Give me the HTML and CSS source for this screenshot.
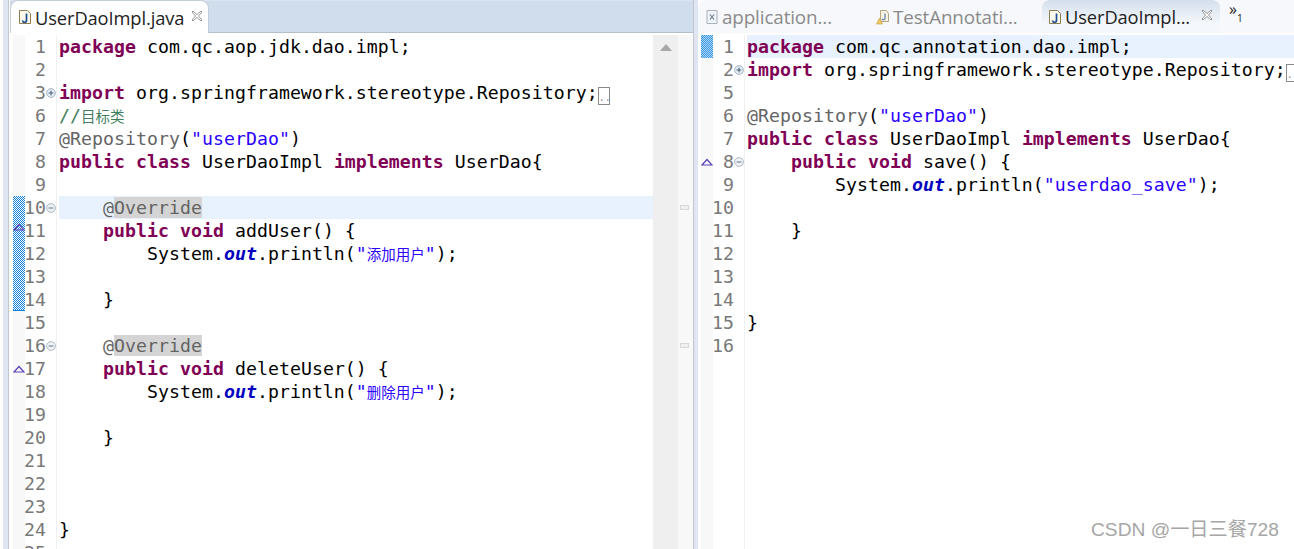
FILE: index.html
```html
<!DOCTYPE html>
<html lang="zh">
<head>
<meta charset="UTF-8">
<title>UserDaoImpl.java</title>
<link rel="stylesheet" href="styles.css">
</head>
<body>
<svg class="defs" width="0" height="0">
<symbol id="jfile" viewBox="0 0 14 16"><path d="M1.5 1.5h8l3 3v10h-11z" fill="#fbf8ee" stroke="#8f7f50"/><path d="M8.5 4.5v6.5a2 2 0 0 1-4 .5" fill="none" stroke="#1f4f8f" stroke-width="1.7"/></symbol>
<symbol id="close" viewBox="0 0 12 12"><path d="M2 1l4 3.5L10 1l1 1-3.5 4L11 10l-1 1-4-3.5L2 11l-1-1 3.5-4L1 2z" fill="#fff" stroke="#8a8a8a" stroke-width=".9"/></symbol>
<symbol id="rev" viewBox="0 0 12 8"><path d="M1 7L6 1.5 11 7z" fill="none" stroke="#5a3fb5" stroke-width="1.2"/></symbol>
<symbol id="plus" viewBox="0 0 10 10"><circle cx="5" cy="5" r="4.4" fill="#e4ebf2" stroke="#9fb0c0" stroke-width=".9"/><path d="M2.6 5h4.8M5 2.6v4.8" stroke="#33506e" stroke-width=".9"/></symbol>
<symbol id="minus" viewBox="0 0 10 10"><circle cx="5" cy="5" r="4.4" fill="#eef1f4" stroke="#a8b4c0" stroke-width=".9"/><path d="M2.6 5h4.8" stroke="#5a6a7a" stroke-width=".9"/></symbol>
</svg>

<div class="strip"></div>

<div class="pane pane-left">
  <div class="tabbar tabbar-left">
    <div class="tab tab-open">
      <svg class="ficon"><use href="#jfile"/></svg>
      <span class="tab-name">UserDaoImpl.java</span>
      <svg class="xicon"><use href="#close"/></svg>
    </div>
  </div>
  <div class="editor">
    <div class="ruler">
      <div class="mark-row"></div><div class="mark-row"></div><div class="mark-row"></div><div class="mark-row"></div><div class="mark-row"></div><div class="mark-row"></div><div class="mark-row"></div>
      <div class="diff diff-5"><svg class="rev rev-in"><use href="#rev"/></svg></div>
      <div class="mark-row"></div><div class="mark-row"></div>
      <div class="mark-row"><svg class="rev"><use href="#rev"/></svg></div>
    </div>
    <div class="nums">
      <div>1</div><div>2</div><div>3</div><div>6</div><div>7</div><div>8</div><div>9</div><div>10</div><div>11</div><div>12</div><div>13</div><div>14</div><div>15</div><div>16</div><div>17</div><div>18</div><div>19</div><div>20</div><div>21</div><div>22</div><div>23</div><div>24</div><div>25</div>
    </div>
    <div class="folds">
      <div></div><div></div><div><svg class="fold"><use href="#plus"/></svg></div><div></div><div></div><div></div><div></div><div><svg class="fold"><use href="#minus"/></svg></div><div></div><div></div><div></div><div></div><div></div><div><svg class="fold"><use href="#minus"/></svg></div>
    </div>
    <div class="code">
      <div><b>package</b> com.qc.aop.jdk.dao.impl;</div>
      <div></div>
      <div><b>import</b> org.springframework.stereotype.Repository;<span class="collapsed">..</span></div>
      <div><span class="cm">//<span class="cjk">目标类</span></span></div>
      <div><span class="an">@Repository</span>(<span class="st">"userDao"</span>)</div>
      <div><b>public</b> <b>class</b> UserDaoImpl <b>implements</b> UserDao{</div>
      <div></div>
      <div class="cur">    <span class="an">@<span class="occ">Override</span></span></div>
      <div>    <b>public</b> <b>void</b> addUser() {</div>
      <div>        System.<i>out</i>.println(<span class="st">"<span class="cjk">添加用户</span>"</span>);</div>
      <div></div>
      <div>    }</div>
      <div></div>
      <div>    <span class="an">@<span class="occ">Override</span></span></div>
      <div>    <b>public</b> <b>void</b> deleteUser() {</div>
      <div>        System.<i>out</i>.println(<span class="st">"<span class="cjk">删除用户</span>"</span>);</div>
      <div></div>
      <div>    }</div>
      <div></div>
      <div></div>
      <div></div>
      <div>}</div>
    </div>
    <div class="scrollbar"><div class="arrow-up"></div></div>
    <div class="overview">
      <div class="occ-mark occ-first"></div>
      <div class="occ-mark occ-second"></div>
    </div>
  </div>
</div>

<div class="sash"></div>

<div class="pane pane-right">
  <div class="tabbar tabbar-right">
    <div class="tab tab-app">
      <svg class="ficon" viewBox="0 0 14 16"><path d="M2 1.5h10v13H2z" fill="#f0f3f7" stroke="#a8b2be"/><path d="M5 5.5l4 5M9 5.5l-4 5" stroke="#6b7f95" stroke-width="1.2"/></svg>
      <span class="tab-name dim">application...</span>
    </div>
    <div class="tab tab-test">
      <svg class="ficon" viewBox="0 0 14 16"><path d="M4.5 1.5h6l2 3v8h-8z" fill="#f6f1e2" stroke="#b5a67c"/><path d="M9 4.5v5a1.7 1.7 0 0 1-3 .5" fill="none" stroke="#6f8fb5" stroke-width="1.4"/><path d="M3.5 9L6.5 15H.5z" fill="#f0c860" stroke="#c9a040" stroke-width=".6"/></svg>
      <span class="tab-name dim">TestAnnotati...</span>
    </div>
    <div class="tab tab-active">
      <svg class="ficon"><use href="#jfile"/></svg>
      <span class="tab-name">UserDaoImpl...</span>
      <svg class="xicon"><use href="#close"/></svg>
    </div>
    <div class="more"><span class="chev">»</span><span class="count">1</span></div>
  </div>
  <div class="editor">
    <div class="ruler">
      <div class="diff diff-1"></div>
      <div class="mark-row"></div><div class="mark-row"></div><div class="mark-row"></div><div class="mark-row"></div>
      <div class="mark-row"><svg class="rev"><use href="#rev"/></svg></div>
    </div>
    <div class="nums">
      <div>1</div><div>2</div><div>5</div><div>6</div><div>7</div><div>8</div><div>9</div><div>10</div><div>11</div><div>12</div><div>13</div><div>14</div><div>15</div><div>16</div>
    </div>
    <div class="folds">
      <div></div><div><svg class="fold"><use href="#plus"/></svg></div><div></div><div></div><div></div><div><svg class="fold"><use href="#minus"/></svg></div>
    </div>
    <div class="code">
      <div class="cur"><b>package</b> com.qc.annotation.dao.impl;</div>
      <div><b>import</b> org.springframework.stereotype.Repository;<span class="collapsed">..</span></div>
      <div></div>
      <div><span class="an">@Repository</span>(<span class="st">"userDao"</span>)</div>
      <div><b>public</b> <b>class</b> UserDaoImpl <b>implements</b> UserDao{</div>
      <div>    <b>public</b> <b>void</b> save() {</div>
      <div>        System.<i>out</i>.println(<span class="st">"userdao_save"</span>);</div>
      <div></div>
      <div>    }</div>
      <div></div>
      <div></div>
      <div></div>
      <div>}</div>
    </div>
  </div>
</div>

<div class="watermark">CSDN @一日三餐728</div>
</body>
</html>
```
FILE: styles.css
```css
*{margin:0;padding:0;box-sizing:border-box;}
html,body{height:100%;}
body{background:#fff;display:flex;overflow:hidden;position:relative;font-family:"DejaVu Sans Mono","Noto Sans CJK SC",monospace;}
.defs{position:absolute;}

.strip{width:6px;margin-left:3px;margin-right:1px;background:#dfe5f3;border-right:1px solid #c3c7d0;flex:none;}
.sash{width:5px;flex:none;background:#dfe5f3;border-left:1px solid #c3c7d0;}
.pane{display:flex;flex-direction:column;height:100%;overflow:hidden;}
.pane-left{width:683px;flex:none;}
.pane-right{flex:1;min-width:0;}

.tabbar{height:33px;flex:none;display:flex;font-family:"Open Sans","Noto Sans",sans-serif;}
.tabbar-left{background:#cfdded;border-bottom:1px solid #b4bfcc;border-top:1px solid #dbe3ee;}
.tabbar-right{background:#f6f8fb;border-radius:8px 0 0 0;}
.tab{display:flex;align-items:center;height:33px;font-size:18.3px;color:#222;white-space:nowrap;flex:none;}
.tab-open{width:199px;padding-left:7px;margin-top:-1px;background:#fff;border:1px solid #c3ccd8;border-bottom:none;border-radius:8px 8px 0 0;}
.tab-app{width:170px;padding-left:7px;}
.tab-test{width:174px;padding-left:8px;}
.tab-active{width:178px;padding-left:6px;background:linear-gradient(#d3dfec,#f4f7fb 70%);border-radius:8px 8px 0 0;}
.ficon{width:14px;height:16px;flex:none;margin-right:3px;}
.tab-name{letter-spacing:-.1px;}
.dim{color:#8a8a8a;font-size:18.8px;}
.xicon{width:12px;height:12px;flex:none;margin-left:7px;margin-top:-3px;}
.tab-active .xicon{margin-left:11px;}
.more{position:relative;width:30px;color:#222;font-size:16px;line-height:16px;padding:1px 0 0 9px;}
.count{font-size:10px;position:relative;top:7px;}

.editor{flex:1;display:flex;min-height:0;margin-top:2px;overflow:hidden;}
.ruler{width:12px;margin-left:3px;flex:none;background:#f8f8f8;}
.mark-row{height:23px;display:flex;align-items:center;}
.diff{background-color:#fff;background-image:conic-gradient(#0f80d8 25%,#fff 0 50%,#0f80d8 0 75%,#fff 0);background-size:2px 2px;border-bottom:1px solid #0f80d8;position:relative;}
.diff-5{height:115px;}
.diff-1{height:23px;background-image:conic-gradient(#3c9ae6 25%,#a9d4f5 0 50%,#3c9ae6 0 75%,#a9d4f5 0);border-bottom:none;}
.rev{width:12px;height:8px;display:block;}
.rev-in{position:absolute;left:0;top:27px;}

.nums,.code{font-size:18.2px;line-height:23px;}
.nums{width:21px;flex:none;color:#787878;text-align:right;}
.nums>div{height:23px;margin-left:-12px;}
.folds{width:11px;flex:none;border-right:1px solid #f0f0f0;}
.folds>div{height:23px;display:flex;align-items:center;}
.fold{width:10px;height:10px;display:block;}
.code{flex:1;min-width:0;margin-left:2px;color:#000;letter-spacing:.044px;}
.code>div{height:23px;white-space:pre;}
.code b{color:#7f0055;font-weight:bold;}
.code i{color:#0000c0;font-weight:bold;font-style:italic;}
.cur{background:#e8f2fe;}
.occ{background:#d4d4d4;}
.an{color:#646464;}
.st{color:#2a00ff;}
.cm{color:#3f7f5f;}
.cjk{font-family:"Noto Sans CJK SC",sans-serif;font-size:14.5px;letter-spacing:0;}
.collapsed{display:inline-block;width:12px;height:18px;border:1px solid #8a8a8a;font-size:10px;line-height:20px;color:#888;vertical-align:-2px;letter-spacing:0;text-align:center;}

.scrollbar{width:25px;flex:none;background:#efefef;padding:9px 0 0 7px;}
.arrow-up{width:0;height:0;border-left:6px solid transparent;border-right:6px solid transparent;border-bottom:7px solid #a8a8a8;}
.overview{width:15px;flex:none;background:#f8f8f8;position:relative;}
.occ-mark{position:absolute;left:2px;width:9px;height:5px;background:#f0f0f0;border:1px solid #d8d8d8;}
.occ-first{top:170px;}
.occ-second{top:308px;}

.watermark{position:absolute;left:1091px;top:519px;font-family:"Liberation Sans","Noto Sans CJK SC",sans-serif;font-size:19.2px;line-height:22px;color:#a6a6a6;white-space:nowrap;}
```
